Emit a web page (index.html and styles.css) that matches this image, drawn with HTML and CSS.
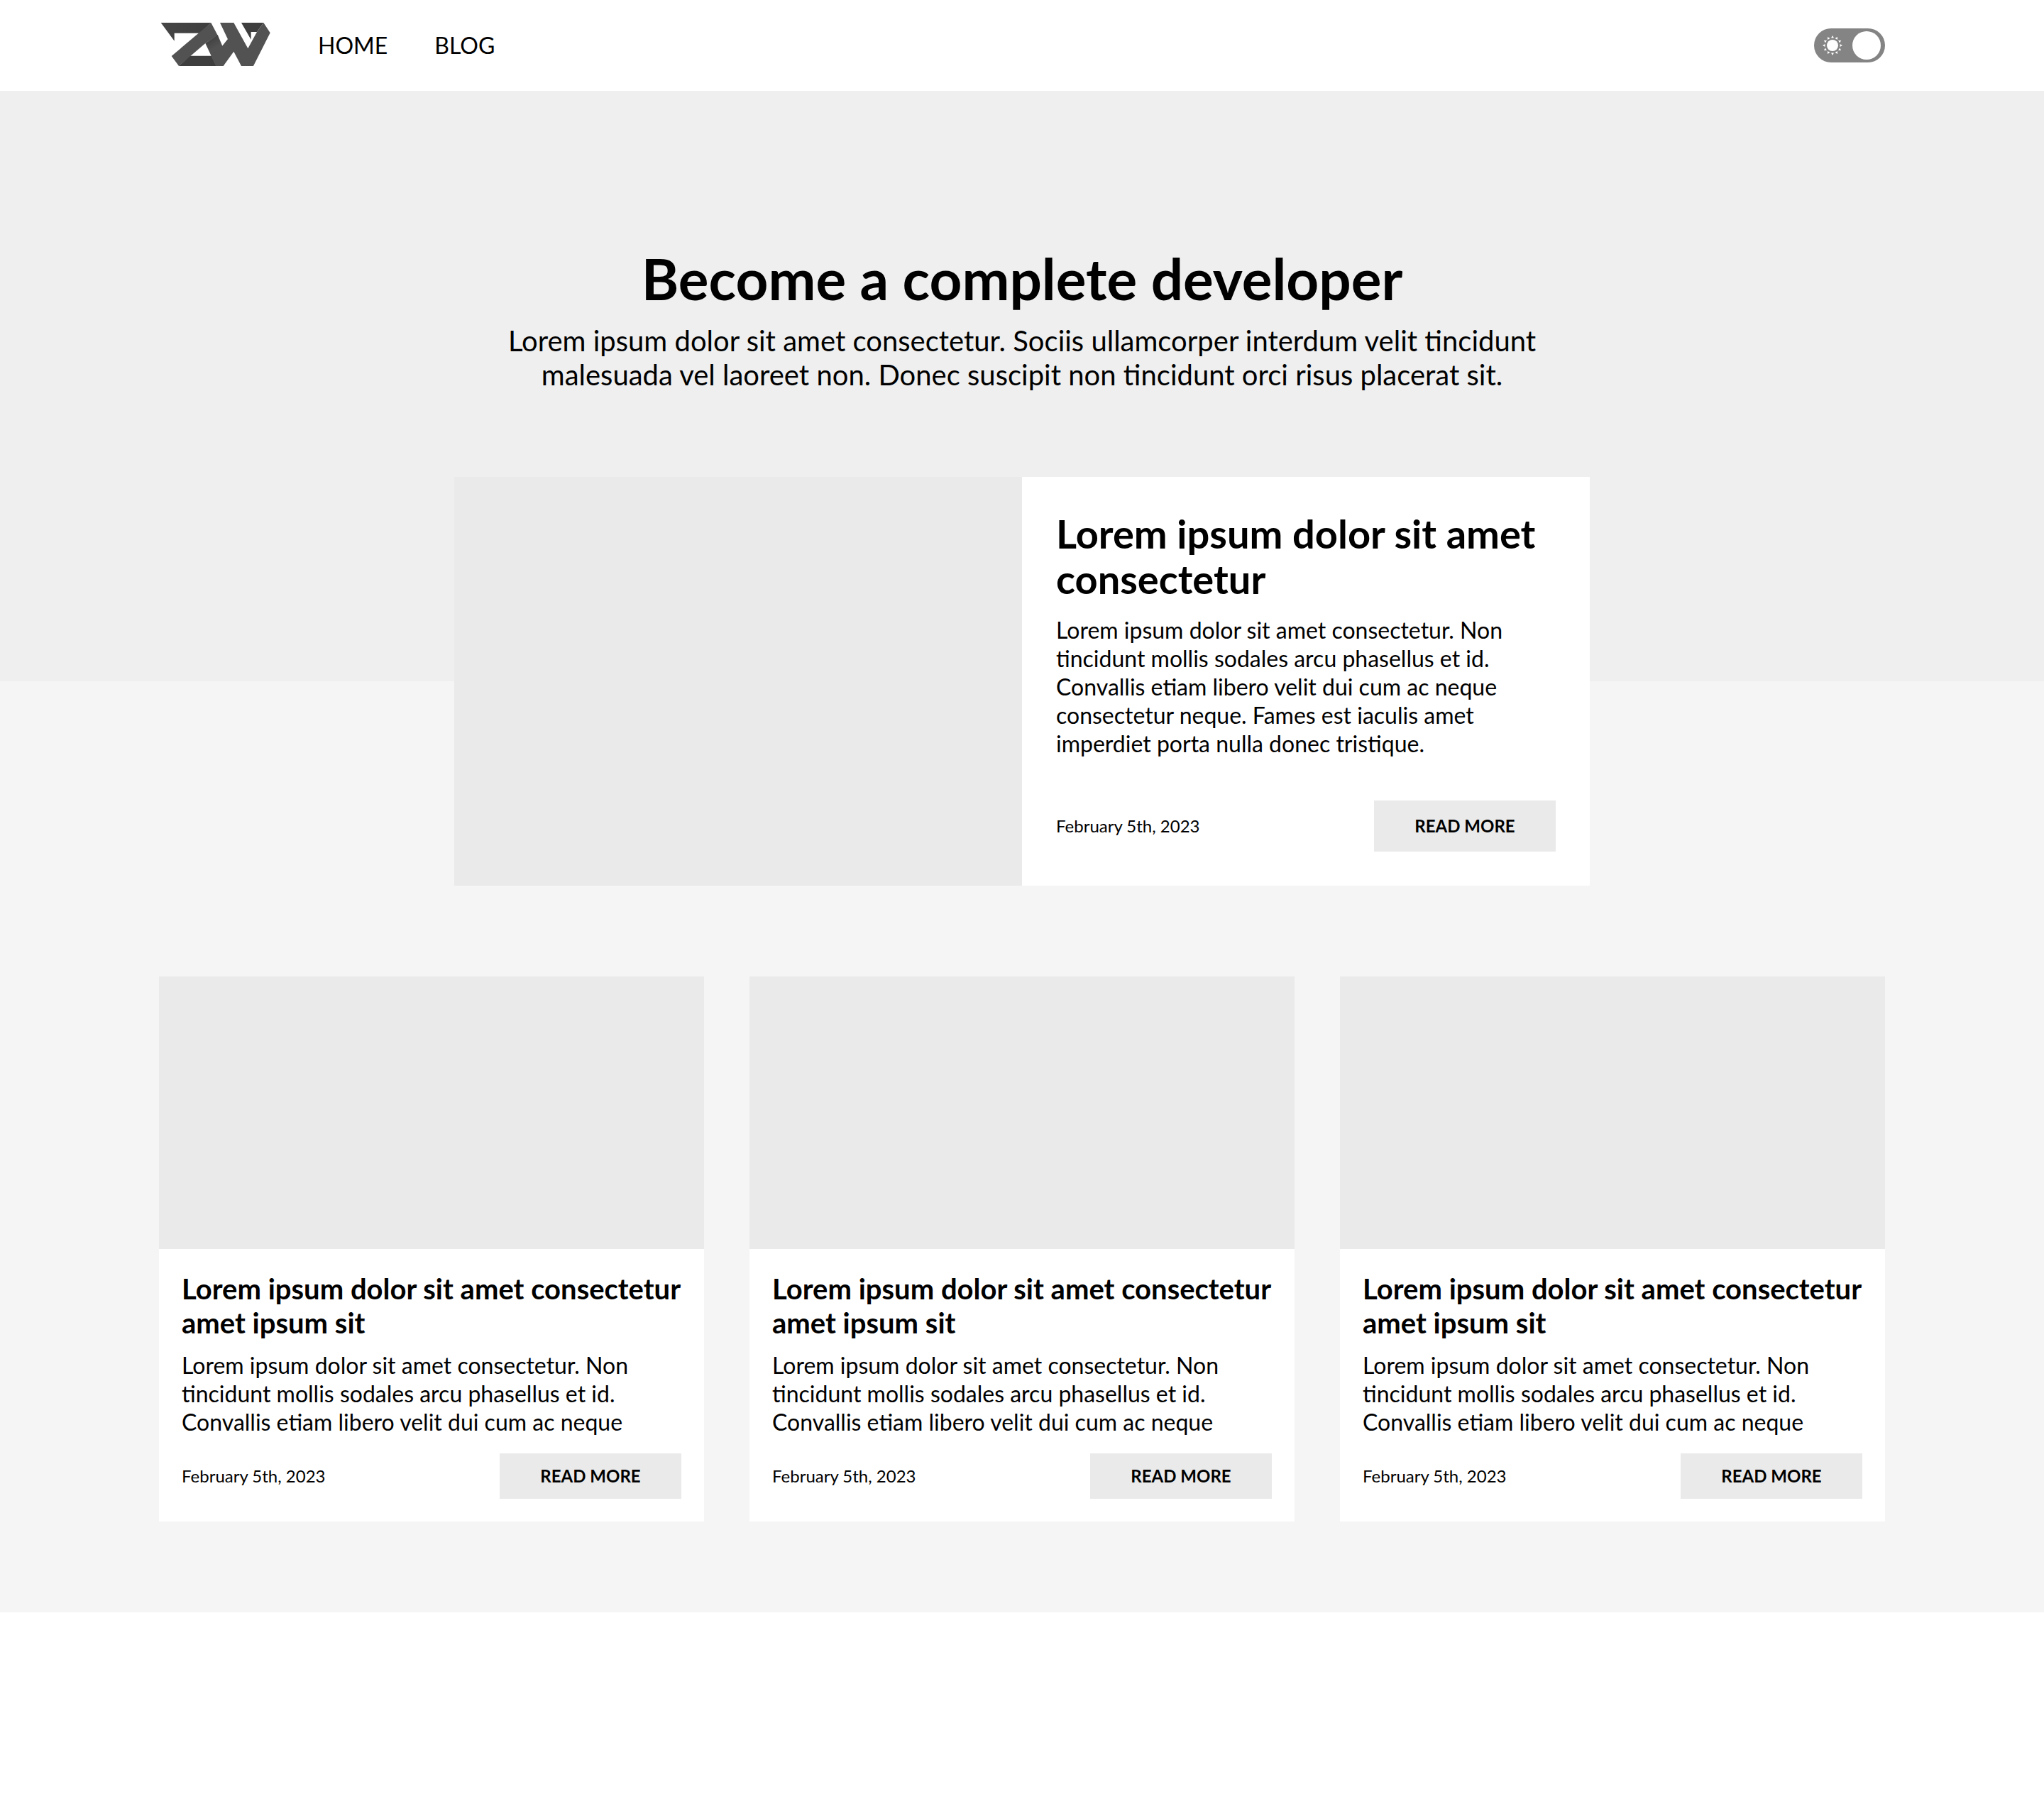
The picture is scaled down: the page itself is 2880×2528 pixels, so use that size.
FILE: index.html
```html
<!DOCTYPE html>
<html lang="en">
<head>
<meta charset="utf-8">
<meta name="viewport" content="width=device-width, initial-scale=1">
<title>ZW Blog</title>
<link rel="stylesheet" href="styles.css">
</head>
<body>
<header class="site-header">
  <a class="logo" href="#" aria-label="ZW home">
    <svg class="logo-mark" viewBox="42 51 480 192" aria-hidden="true">
      <defs>
        <linearGradient id="fold-top" x1="0" y1="0" x2="1" y2="0"><stop offset="0" stop-color="#464646"/><stop offset="1" stop-color="#3e3e3e"/></linearGradient>
        <linearGradient id="fold-mid" gradientUnits="userSpaceOnUse" x1="262" y1="122" x2="282" y2="156"><stop offset="0" stop-color="#434343"/><stop offset="1" stop-color="#525252"/></linearGradient>
      </defs>
      <path fill="url(#fold-top)" d="M50 51H262L215 95H107V128Z"/>
      <path fill="#3e3e3e" d="M126 234L172 191H264L284 234Z"/>
      <path fill="#3e3e3e" d="M390 51H484L456 90H431V122Z"/>
      <path fill="url(#fold-mid)" d="M238 138L290 102L310 149L333 121L340 180L314 234H283Z"/>
      <path fill="#525252" d="M262 51L290 104L238 138L126 234L95 192Z"/>
      <path fill="#525252" d="M300 51H358L418 160L456 90L484 51L512 94L441 234H390L358 173L314 234H283L262 188L310 149L333 121Z"/>
    </svg>
  </a>
  <nav class="nav">
    <a href="#">HOME</a>
    <a href="#blog">BLOG</a>
  </nav>
  <label class="theme-switch">
    <input type="checkbox" role="switch" aria-label="Light theme" checked>
    <svg class="sun" viewBox="-14 -14 28 28" aria-hidden="true">
      <circle r="8"/>
      <path id="ray" d="M-2 -10.500L0 -14L2 -10.500Z"/>
      <use href="#ray" transform="rotate(30)"/>
      <use href="#ray" transform="rotate(60)"/>
      <use href="#ray" transform="rotate(90)"/>
      <use href="#ray" transform="rotate(120)"/>
      <use href="#ray" transform="rotate(150)"/>
      <use href="#ray" transform="rotate(180)"/>
      <use href="#ray" transform="rotate(210)"/>
      <use href="#ray" transform="rotate(240)"/>
      <use href="#ray" transform="rotate(270)"/>
      <use href="#ray" transform="rotate(300)"/>
      <use href="#ray" transform="rotate(330)"/>
    </svg>
  </label>
</header>
<main>
  <section class="hero">
    <h1>Become a complete developer</h1>
    <p>Lorem ipsum dolor sit amet consectetur. Sociis ullamcorper interdum velit tincidunt malesuada vel laoreet non. Donec suscipit non tincidunt orci risus placerat sit.</p>
  </section>
  <section class="posts" id="blog">
    <article class="feature">
      <div class="feature-image"></div>
      <div class="feature-body">
        <h2>Lorem ipsum dolor sit amet consectetur</h2>
        <p>Lorem ipsum dolor sit amet consectetur. Non tincidunt mollis sodales arcu phasellus et id. Convallis etiam libero velit dui cum ac neque consectetur neque. Fames est iaculis amet imperdiet porta nulla donec tristique.</p>
        <div class="meta">
          <time datetime="2023-02-05">February 5th, 2023</time>
          <button class="read-more read-more-large" type="button">READ MORE</button>
        </div>
      </div>
    </article>
    <div class="cards">
      <article class="card">
        <div class="card-image"></div>
        <div class="card-body">
          <h3>Lorem ipsum dolor sit amet consectetur amet ipsum sit</h3>
          <p>Lorem ipsum dolor sit amet consectetur. Non tincidunt mollis sodales arcu phasellus et id. Convallis etiam libero velit dui cum ac neque</p>
          <div class="meta">
            <time datetime="2023-02-05">February 5th, 2023</time>
            <button class="read-more" type="button">READ MORE</button>
          </div>
        </div>
      </article>
      <article class="card">
        <div class="card-image"></div>
        <div class="card-body">
          <h3>Lorem ipsum dolor sit amet consectetur amet ipsum sit</h3>
          <p>Lorem ipsum dolor sit amet consectetur. Non tincidunt mollis sodales arcu phasellus et id. Convallis etiam libero velit dui cum ac neque</p>
          <div class="meta">
            <time datetime="2023-02-05">February 5th, 2023</time>
            <button class="read-more" type="button">READ MORE</button>
          </div>
        </div>
      </article>
      <article class="card">
        <div class="card-image"></div>
        <div class="card-body">
          <h3>Lorem ipsum dolor sit amet consectetur amet ipsum sit</h3>
          <p>Lorem ipsum dolor sit amet consectetur. Non tincidunt mollis sodales arcu phasellus et id. Convallis etiam libero velit dui cum ac neque</p>
          <div class="meta">
            <time datetime="2023-02-05">February 5th, 2023</time>
            <button class="read-more" type="button">READ MORE</button>
          </div>
        </div>
      </article>
    </div>
  </section>
</main>
</body>
</html>
```

FILE: styles.css
```css
* {
  box-sizing: border-box;
}

body {
  margin: 0;
  background: #fff;
  color: #000;
  font-family: Lato, "Liberation Sans", sans-serif;
  font-size: 32px;
  line-height: 40px;
}

h1,
h2,
h3,
p {
  margin: 0;
}

.site-header {
  display: flex;
  align-items: center;
  gap: 64px;
  min-height: 128px;
  padding: 0 224px;
}

.logo-mark {
  display: block;
  width: 160px;
  height: 64px;
}

.nav {
  display: flex;
  gap: 66px;
}

.nav a {
  color: inherit;
  text-decoration: none;
}

.theme-switch {
  position: relative;
  margin-left: auto;
  cursor: pointer;
}

.theme-switch input {
  appearance: none;
  display: flex;
  align-items: center;
  width: 100px;
  height: 48px;
  margin: 0;
  padding: 0 6px;
  border-radius: 24px;
  background: #848484;
  cursor: pointer;
}

.theme-switch input::before {
  content: "";
  width: 40px;
  height: 40px;
  border-radius: 50%;
  background: #fff;
}

.theme-switch input:checked::before {
  margin-left: auto;
}

.sun {
  position: absolute;
  top: 10px;
  left: 12px;
  width: 28px;
  height: 28px;
  fill: #fff;
}

.hero {
  display: flex;
  flex-direction: column;
  align-items: center;
  gap: 16px;
  padding: 216px 224px 408px;
  background: #efefef;
  text-align: center;
}

.hero h1 {
  font-size: 80px;
  line-height: 96px;
}

.hero p {
  max-width: 1600px;
  font-size: 40px;
  line-height: 48px;
}

.posts {
  display: flex;
  flex-direction: column;
  gap: 128px;
  padding: 0 224px 128px;
  background: #f5f5f5;
}

.feature {
  display: grid;
  grid-template-columns: 1fr 1fr;
  align-self: center;
  width: 100%;
  max-width: 1600px;
  min-height: 576px;
  margin-top: -288px;
  background: #fff;
}

.feature-image,
.card-image {
  background: #eaeaea;
}

.feature-body {
  display: flex;
  flex-direction: column;
  gap: 20px;
  padding: 48px;
}

.feature-body h2 {
  font-size: 56px;
  line-height: 64px;
}

.meta {
  display: flex;
  align-items: center;
  justify-content: space-between;
  margin-top: auto;
  font-size: 24px;
  line-height: 32px;
}

.read-more {
  width: 256px;
  padding: 16px;
  border: 0;
  background: #eaeaea;
  color: inherit;
  font: inherit;
  font-weight: 700;
  cursor: pointer;
}

.read-more-large {
  padding: 20px;
}

.cards {
  display: grid;
  grid-template-columns: repeat(3, 1fr);
  gap: 64px;
}

.card {
  display: flex;
  flex-direction: column;
  background: #fff;
}

.card-image {
  aspect-ratio: 2 / 1;
}

.card-body {
  display: flex;
  flex: 1;
  flex-direction: column;
  padding: 32px;
}

.card-body h3 {
  margin-bottom: 16px;
  font-size: 40px;
  line-height: 48px;
}

.card-body p {
  margin-bottom: 24px;
}
```
